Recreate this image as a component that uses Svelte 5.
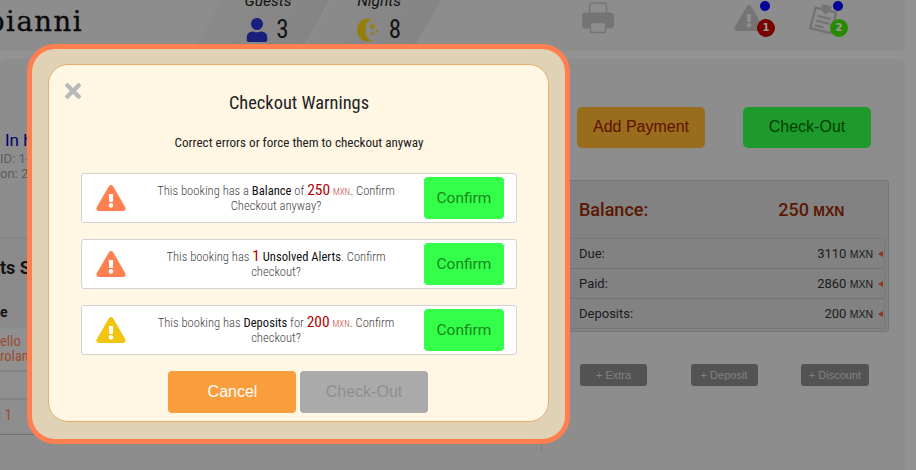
<script>
  const warnings = [
    { color: '#ff7f50', pre: 'This booking has a ', strong: 'Balance', mid: ' of ', num: '250', cur: 'MXN', post: '. Confirm Checkout anyway?' },
    { color: '#ff7f50', pre: 'This booking has ', num: '1', strong: 'Unsolved Alerts', strongAfter: true, post: '. Confirm checkout?' },
    { color: '#f1c40f', pre: 'This booking has ', strong: 'Deposits', mid: ' for ', num: '200', cur: 'MXN', post: '. Confirm checkout?' }
  ];
  const totals = [
    { label: 'Due:', value: '3110' },
    { label: 'Paid:', value: '2860' },
    { label: 'Deposits:', value: '200' }
  ];
  const warn = 'M569.517 440.013C587.975 472.007 564.806 512 527.94 512H48.054c-36.937 0-59.999-40.055-41.577-71.987L246.423 24.035c18.467-32.009 64.72-31.951 83.154 0l239.94 416.007zM288 354c-25.405 0-46 20.595-46 46s20.595 46 46 46 46-20.595 46-46-20.595-46-46-46zm-43.673-165.346l7.418 136c.347 6.364 5.609 11.346 11.982 11.346h48.546c6.373 0 11.635-4.982 11.982-11.346l7.418-136c.375-6.874-5.098-12.654-11.982-12.654h-63.383c-6.884 0-12.356 5.78-11.981 12.654z';
</script>

<div class="page">
  <header class="top">
    <div class="logo">bianni</div>
    <div class="tabs">
      <div class="tab">
        <div class="tab-in">
          <div class="tab-title">Guests</div>
          <div class="tab-val">
            <svg class="user" viewBox="0 0 448 512"><path fill="#2a35cc" d="M224 256c70.7 0 128-57.3 128-128S294.7 0 224 0 96 57.3 96 128s57.3 128 128 128zm89.6 32h-16.7c-22.2 10.2-46.9 16-72.9 16s-50.6-5.8-72.9-16h-16.7C60.2 288 0 348.2 0 422.4V464c0 26.5 21.5 48 48 48h352c26.5 0 48-21.5 48-48v-41.6c0-74.2-60.2-134.4-134.4-134.4z"/></svg>
            <span>3</span>
          </div>
        </div>
      </div>
      <div class="tab">
        <div class="tab-in">
          <div class="tab-title">Nights</div>
          <div class="tab-val">
            <svg class="moon" viewBox="0 0 24 24">
              <path fill="#f9d20e" d="M13 0.5a11.5 11.5 0 1 0 0 23a11.5 11.5 0 0 0 3.4-.5a10 10 0 0 1-6.4-11a10 10 0 0 1 6.4-11a11.5 11.5 0 0 0-3.4-.5z"/>
              <path fill="#f9d20e" d="M17 5l1 2.3 2.4.2-1.8 1.6.6 2.4-2.2-1.3-2.2 1.3.6-2.4-1.8-1.6 2.4-.2z"/>
              <path fill="#f9d20e" d="M21.5 11.5l.5 1.2 1.3.1-1 .9.3 1.3-1.1-.7-1.1.7.3-1.3-1-.9 1.3-.1z"/>
              <path fill="#f9d20e" d="M16.5 13.5l.6 1.4 1.5.1-1.1 1 .3 1.5-1.3-.8-1.3.8.3-1.5-1.1-1 1.5-.1z"/>
            </svg>
            <span>8</span>
          </div>
        </div>
      </div>
    </div>
    <svg class="print" viewBox="0 0 32 32">
      <rect x="7.5" y="1" width="17" height="13" rx="2.5" fill="none" stroke="#c2c2c2" stroke-width="1.4"/>
      <path fill="#c2c2c2" d="M4 10.5h24a4 4 0 0 1 4 4v9a3 3 0 0 1-3 3h-26a3 3 0 0 1-3-3v-9a4 4 0 0 1 4-4z"/>
      <rect x="8.5" y="20.5" width="15" height="10" rx="1" fill="#ececec" stroke="#c2c2c2" stroke-width="1.4"/>
    </svg>
    <div class="notice alert">
      <svg viewBox="0 0 576 512"><path fill="#c2c2c2" d={warn}/></svg>
      <i class="dot"></i>
      <b class="count red">1</b>
    </div>
    <div class="notice notes">
      <svg viewBox="0 0 32 32">
        <g transform="rotate(14 16 17)">
          <path fill="none" stroke="#c2c2c2" stroke-width="2.6" d="M5 7h22v22h-22z"/>
          <path fill="#c2c2c2" d="M11 2h10v5l-5 5-5-5z"/>
          <path fill="none" stroke="#c2c2c2" stroke-width="2.4" d="M9 15h14M9 20h14M9 25h9"/>
        </g>
      </svg>
      <i class="dot"></i>
      <b class="count green">2</b>
    </div>
  </header>

  <main class="panel">
    <section class="left">
      <div class="status">
        <div class="in">In house</div>
        <div class="meta">ID: 1-204</div>
        <div class="meta">on: 2023</div>
      </div>
      <div class="guests">
        <h3>ts Summary</h3>
        <div class="col">e</div>
        <div class="cell name">ello<br />rolanni</div>
        <div class="cell empty"></div>
        <div class="cell single">: 1</div>
      </div>
    </section>
    <section class="right">
      <div class="actions">
        <button class="big orange">Add Payment</button>
        <button class="big lime">Check-Out</button>
      </div>
      <div class="summary">
        <div class="balance"><span>Balance:</span><span class="bal-val">250 <small>MXN</small></span></div>
        <div class="rows">
          {#each totals as t}
            <div class="row">
              <span>{t.label}</span>
              <span class="amount">{t.value} <small>MXN</small></span>
              <i class="tri"></i>
            </div>
          {/each}
        </div>
      </div>
      <div class="extras">
        <button>+ Extra</button>
        <button>+ Deposit</button>
        <button>+ Discount</button>
      </div>
    </section>
  </main>

  <div class="overlay"></div>

  <div class="modal">
    <div class="inner">
      <svg class="close" viewBox="0 0 352 512"><path fill="#b9b9b9" d="M242.72 256l100.07-100.07c12.28-12.28 12.28-32.19 0-44.48l-22.24-22.24c-12.28-12.28-32.19-12.28-44.48 0L176 189.28 75.93 89.21c-12.28-12.28-32.19-12.28-44.48 0L9.21 111.45c-12.28 12.28-12.28 32.19 0 44.48L109.28 256 9.21 356.07c-12.28 12.28-12.28 32.19 0 44.48l22.24 22.24c12.28 12.28 32.2 12.28 44.48 0L176 322.72l100.07 100.07c12.28 12.28 32.2 12.28 44.48 0l22.24-22.24c12.28-12.28 12.28-32.19 0-44.48L242.72 256z"/></svg>
      <h2>Checkout Warnings</h2>
      <p class="sub">Correct errors or force them to checkout anyway</p>
      <div class="list">
        {#each warnings as w}
          <div class="warn">
            <svg class="warn-ic" viewBox="0 0 576 512"><path fill={w.color} d={warn}/></svg>
            <div class="msg">
              {w.pre}{#if w.strongAfter}<em>{w.num}</em> <b>{w.strong}</b>{:else}<b>{w.strong}</b>{w.mid}<em>{w.num}</em> <small>{w.cur}</small>{/if}{w.post}
            </div>
            <button class="confirm">Confirm</button>
          </div>
        {/each}
      </div>
      <div class="foot">
        <button class="cancel">Cancel</button>
        <button class="disabled">Check-Out</button>
      </div>
    </div>
  </div>
</div>

<style>
  :global(body) { margin: 0; }
  .page {
    position: relative;
    width: 916px;
    height: 470px;
    overflow: hidden;
    background: #f4f4f4;
    font-family: Roboto, "Liberation Sans", sans-serif;
    color: #333;
  }
  button { font-family: "Liberation Sans", Arial, sans-serif; border: 0; cursor: pointer; }

  .top {
    display: flex;
    align-items: flex-start;
    height: 51px;
    width: 905px;
    background: #ececec;
    border-radius: 0 0 6px 0;
    overflow: hidden;
    position: relative;
  }
  .logo {
    font-family: "DejaVu Serif", serif;
    font-size: 27.5px;
    line-height: 30px;
    margin: 6px 0 0 -13px;
    width: 234px;
    flex: none;
    color: #111;
    letter-spacing: 1.5px;
    -webkit-text-stroke: .35px #111;
  }
  .tabs { display: flex; flex: none; gap: 2px; height: 51px; width: 340px; }
  .tab {
    width: 109px;
    height: 51px;
    background: linear-gradient(90deg, #e6e6e6, #dedede);
    transform: skewX(-29.6deg);
    transform-origin: top left;
  }
  .tab-in {
    transform: skewX(29.6deg);
    transform-origin: top left;
    width: 110px;
    text-align: center;
    margin-left: -13px;
  }
  .tab-title { font-style: italic; font-size: 15.5px; line-height: 18px; margin-top: -8px; color: #222; margin-left: 1px; }
  .tab-val {
    display: flex;
    justify-content: center;
    align-items: center;
    gap: 9px;
    margin-top: 7px;
    font-size: 25px;
    line-height: 26px;
    color: #222;
    font-stretch: 75%;
  }
  .user { width: 21px; height: 24px; }
  .moon { width: 24px; height: 24px; }
  .print { width: 32px; height: 32px; margin: 2px 0 0 21px; flex: none; }
  .notice { position: relative; flex: none; }
  .notice svg { display: block; }
  .alert { margin: 5px 0 0 120px; }
  .alert svg { width: 30px; height: 26px; }
  .notes { margin: 3px 0 0 44px; }
  .notes svg { width: 31px; height: 31px; }
  .dot {
    position: absolute;
    width: 10px;
    height: 10px;
    border-radius: 50%;
    background: #0000ff;
  }
  .alert .dot { top: -4px; right: -6px; }
  .notes .dot { top: -2px; right: -4px; }
  .count {
    position: absolute;
    width: 18px;
    height: 18px;
    border-radius: 50%;
    color: #fff;
    font-family: "DejaVu Sans", sans-serif;
    font-size: 10px;
    line-height: 18px;
    text-align: center;
  }
  .alert .count { right: -11px; top: 14px; }
  .notes .count { right: -9px; top: 16px; }
  .red { background: #cc0000; }
  .green { background: #44e600; }

  .panel {
    display: flex;
    width: 905px;
    height: 411px;
    margin-top: 8px;
    background: #ececec;
    border-radius: 6px 6px 0 0;
  }
  .left { width: 541px; flex: none; overflow: hidden; }
  .status { padding-top: 71px; height: 107px; }
  .in { color: #0000b0; font-size: 17px; line-height: 21px; padding-left: 5px; }
  .meta { color: #999; font-size: 13px; line-height: 15px; }
  .guests { border-top: 1px solid #ddd; border-bottom: 1px solid #bbb; background: #e6e6e6; height: 196px; }
  .guests h3 { margin: 0; font-size: 18px; line-height: 22px; padding-top: 19px; height: 40px; color: #222; font-weight: 700; }
  .col { height: 31px; line-height: 30px; font-weight: 700; font-size: 14px; color: #222; }
  .cell { border-bottom: 2px solid #dcdcdc; color: #ff7f50; font-size: 14.5px; line-height: 15px; background: #f0f0f0; font-stretch: 75%; }
  .name { padding-top: 6px; height: 36px; }
  .empty { height: 26px; }
  .single { height: 32px; line-height: 32px; border: 0; background: #ededed; text-indent: -2px; }

  .right { flex: 1; border-left: 1px solid #d5d5d5; height: 393px; }
  .actions { display: flex; gap: 38px; padding: 48px 0 0 35px; height: 73px; }
  .big { width: 128px; height: 41px; border-radius: 5px; font-size: 16px; padding: 0 0 2px; }
  .orange { background: #ffb433; color: #a02000; }
  .lime { background: #33ff4a; color: #006a00; }
  .summary {
    width: 347px;
    height: 152px;
    background: #d9d9d9;
    border: 1px solid #c4c4c4;
    border-radius: 3px;
    box-sizing: border-box;
  }
  .balance {
    display: flex;
    height: 57px;
    align-items: center;
    padding: 0 0 0 36px;
    color: #962a00;
    font-size: 18px;
    font-weight: 500;
  }
  .bal-val { margin-left: 130px; }
  .bal-val small { font-size: 14px; font-family: "Liberation Sans", sans-serif; font-weight: 700; }
  .rows { margin-right: 3px; border: 1px solid #c8c8c8; border-width: 1px 1px 1px 0; }
  .row {
    display: flex;
    align-items: center;
    height: 29px;
    padding-left: 36px;
    font-size: 13px;
    border-bottom: 1px solid #c2c2c2;
    color: #333;
  }
  .row:last-child { border-bottom: 0; }
  .amount { margin-left: auto; margin-right: 5px; }
  .amount small { font-size: 10.5px; font-family: "Liberation Sans", sans-serif; }
  .tri {
    width: 0;
    height: 0;
    border: 3px solid transparent;
    border-right: 5px solid #e8602c;
    border-left: 0;
    margin-right: 1px;
  }
  .extras { display: flex; justify-content: space-between; width: 289px; padding: 32px 0 0 38px; }
  .extras button {
    width: 67px;
    height: 22px;
    padding: 0;
    background: #8a8a8a;
    color: #d8d8d8;
    border-radius: 3px;
    font-size: 11px;
  }
  .extras button:last-child { width: 68px; }

  .overlay { position: absolute; inset: 0; background: rgba(0, 0, 0, .4); }

  .modal {
    position: absolute;
    left: 27px;
    top: 44px;
    width: 543px;
    height: 400px;
    box-sizing: border-box;
    border: 5px solid #ff7f50;
    border-radius: 28px;
    background: #e0d2b4;
    padding: 15px 16px 17px;
  }
  .inner {
    position: relative;
    height: 100%;
    box-sizing: border-box;
    background: #fff6e4;
    border: 1px solid #e8ad6e;
    border-radius: 20px;
    padding: 0 31px 0 32px;
    text-align: center;
    font-stretch: 75%;
  }
  .close { position: absolute; left: 16px; top: 14px; width: 16px; height: 24px; }
  h2 { margin: 0; padding-top: 26px; font-size: 18.4px; line-height: 24px; font-weight: 400; color: #222; font-stretch: 75%; }
  .sub { margin: 0; padding-top: 19px; font-size: 13.1px; line-height: 18px; color: #222; font-weight: 400; height: 39px; }
  .list { display: flex; flex-direction: column; gap: 16px; }
  .warn {
    display: flex;
    align-items: center;
    box-sizing: border-box;
    height: 50px;
    background: #fff;
    border: 1px solid #d3d3d3;
    border-radius: 3px;
    padding: 0 12px 0 14px;
  }
  .warn-ic { width: 30px; height: 26px; flex: none; }
  .msg {
    flex: 1;
    padding: 0 13px 0 15px;
    font-size: 12.6px;
    line-height: 15px;
    font-weight: 300;
    color: #444;
  }
  .msg b { font-weight: 400; color: #111; }
  .msg em { font-style: normal; font-size: 15.5px; line-height: 0; color: #b30000; font-weight: 400; }
  .msg small { font-size: 9px; line-height: 0; color: #c0392b; }
  .confirm {
    width: 80px;
    height: 42px;
    flex: none;
    padding: 0;
    border-radius: 4px;
    background: #33ff4a;
    color: #1a861a;
    font-size: 15.5px;
    font-family: Roboto, sans-serif;
  }
  .foot { display: flex; justify-content: center; gap: 4px; margin: 16px 2px 0 0; }
  .foot button { width: 128px; height: 42px; border-radius: 4px; font-size: 16px; padding: 0; }
  .cancel { background: #fa9d3c; color: #fff; padding-left: 1px !important; }
  .disabled { background: #aaa; color: #8e8e8e; }
</style>
